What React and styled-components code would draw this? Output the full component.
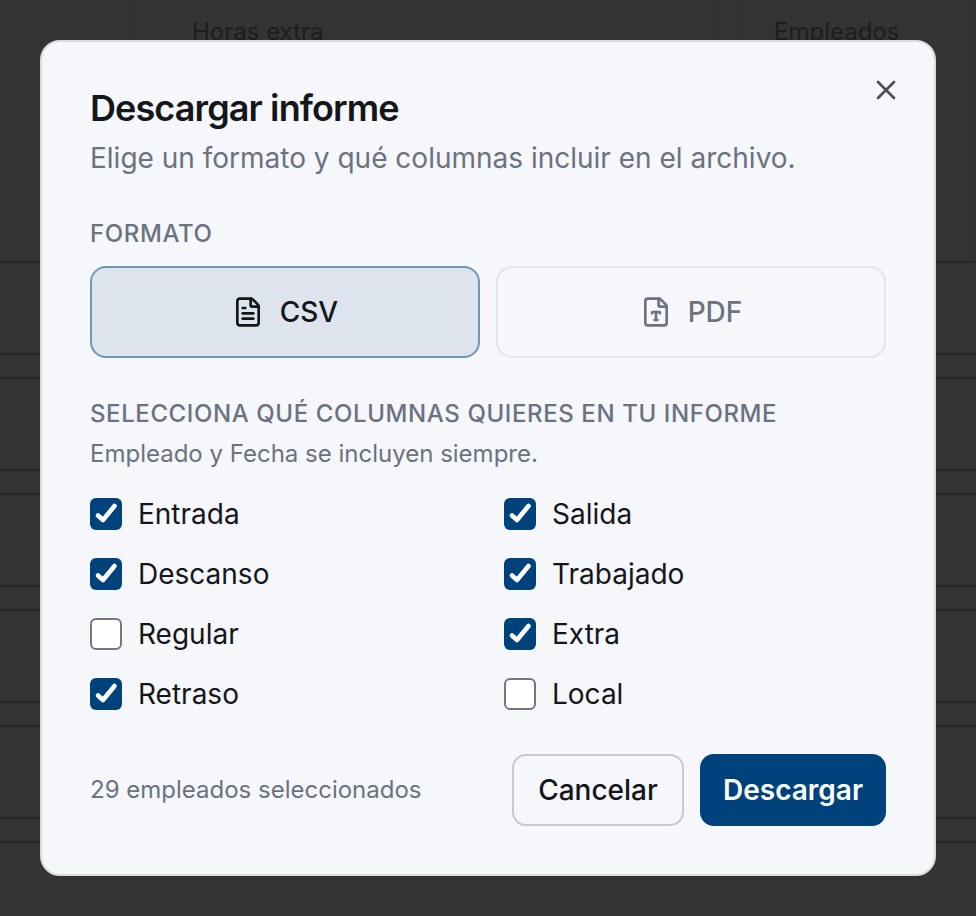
import React, { useState } from "react";
import styled, { createGlobalStyle } from "styled-components";
import { FileText, FileType, X } from "lucide-react";

const columns = [
  { name: "Entrada", on: true },
  { name: "Salida", on: true },
  { name: "Descanso", on: true },
  { name: "Trabajado", on: true },
  { name: "Regular", on: false },
  { name: "Extra", on: true },
  { name: "Retraso", on: true },
  { name: "Local", on: false },
];

const rows = [0, 1, 2, 3, 4];

const App = () => {
  const [format, setFormat] = useState("csv");
  const [selected, setSelected] = useState(columns);

  const onToggleHandler = (name) => {
    setSelected(
      selected.map((col) => (col.name === name ? { ...col, on: !col.on } : col))
    );
  };

  return (
    <>
      <GlobalStyle />
      <Page>
        <TableHead>
          <HeadCell $left="0px" $width="133px" />
          <HeadCell $left="59px" $width="583px">Horas extra</HeadCell>
          <HeadCell $left="0px" $width="26px" />
          <HeadCell $left="32px" $width="234px">Empleados</HeadCell>
        </TableHead>
        {rows.map((row) => (
          <div key={row}>
            <TableRow />
            <RowGap />
          </div>
        ))}
      </Page>
      <Overlay>
        <Dialog>
          <CloseButton aria-label="Cerrar">
            <X size={32} strokeWidth={2} />
          </CloseButton>
          <Title>Descargar informe</Title>
          <Subtitle>Elige un formato y qué columnas incluir en el archivo.</Subtitle>

          <SectionLabel>Formato</SectionLabel>
          <FormatRow>
            <FormatButton $active={format === "csv"} onClick={() => setFormat("csv")}>
              <FileText size={32} strokeWidth={2} />
              CSV
            </FormatButton>
            <FormatButton $active={format === "pdf"} onClick={() => setFormat("pdf")}>
              <FileType size={32} strokeWidth={2} />
              PDF
            </FormatButton>
          </FormatRow>

          <ColumnsLabel>Selecciona qué columnas quieres en tu informe</ColumnsLabel>
          <Hint>Empleado y Fecha se incluyen siempre.</Hint>
          <ColumnGrid>
            {selected.map((col) => (
              <CheckRow key={col.name} onClick={() => onToggleHandler(col.name)}>
                <CheckBox $on={col.on}>
                  {col.on && (
                    <svg width="32" height="32" viewBox="0 0 32 32" fill="none">
                      <path
                        d="M8 17.5 L13 22 L24.5 8"
                        stroke="#fff"
                        strokeWidth="4.6"
                        strokeLinecap="round"
                        strokeLinejoin="round"
                      />
                    </svg>
                  )}
                </CheckBox>
                {col.name}
              </CheckRow>
            ))}
          </ColumnGrid>

          <Footer>
            <Count>29 empleados seleccionados</Count>
            <FooterButtons>
              <CancelButton>Cancelar</CancelButton>
              <DownloadButton>Descargar</DownloadButton>
            </FooterButtons>
          </Footer>
        </Dialog>
      </Overlay>
    </>
  );
};

export default App;

const GlobalStyle = createGlobalStyle`
  html, body {
    margin: 0;
    height: 100%;
    background: #333333;
    overflow: hidden;
  }
  body {
    font-family: Inter, "Liberation Sans", sans-serif;
  }
  * {
    box-sizing: border-box;
  }
`;

const Page = styled.div`
  height: 916px;
  overflow: hidden;
`;

const TableHead = styled.div`
  display: flex;
  height: 263px;
  border-bottom: 2px solid #282a2a;
`;

const HeadCell = styled.div`
  width: ${({ $width }) => $width};
  padding: 18px 0 0 ${({ $left }) => $left};
  font-size: 24px;
  line-height: 28px;
  color: #1c1e1e;
  border-right: 1px solid #303030;
`;

const TableRow = styled.div`
  height: 90px;
`;

const RowGap = styled.div`
  height: 26px;
  border-top: 2px solid #282a2a;
  border-bottom: 2px solid #282a2a;
`;

const Overlay = styled.div`
  position: fixed;
  inset: 0;
  display: flex;
  align-items: center;
  justify-content: center;
`;

const Dialog = styled.div`
  position: relative;
  width: 896px;
  height: 836px;
  padding: 46px 48px 48px;
  background: #f5f7fb;
  border: 2px solid #d9dbe0;
  border-radius: 20px;
`;

const CloseButton = styled.button`
  position: absolute;
  top: 32px;
  right: 32px;
  width: 32px;
  height: 32px;
  padding: 0;
  border: none;
  background: transparent;
  color: #4b4f56;
  cursor: pointer;
`;

const Title = styled.h2`
  margin: 0;
  font-size: 36px;
  line-height: 40px;
  font-weight: 600;
  letter-spacing: -0.9px;
  color: #14161a;
`;

const Subtitle = styled.p`
  margin: 12px 0 0;
  font-size: 28px;
  line-height: 36px;
  color: #6b7280;
`;

const SectionLabel = styled.div`
  margin-top: 42px;
  font-size: 24px;
  line-height: 32px;
  font-weight: 500;
  letter-spacing: 0.6px;
  text-transform: uppercase;
  color: #6b7280;
`;

const FormatRow = styled.div`
  display: grid;
  grid-template-columns: 1fr 1fr;
  gap: 16px;
  margin-top: 16px;
`;

const FormatButton = styled.button`
  display: flex;
  align-items: center;
  justify-content: center;
  gap: 16px;
  height: 92px;
  font-family: inherit;
  font-size: 28px;
  font-weight: 500;
  border-radius: 16px;
  cursor: pointer;
  border: 2px solid ${({ $active }) => ($active ? "#6f97b8" : "#e2e5ea")};
  background: ${({ $active }) => ($active ? "#dde4ed" : "transparent")};
  color: ${({ $active }) => ($active ? "#14161a" : "#6b7280")};
`;

const ColumnsLabel = styled(SectionLabel)`
  margin-top: 40px;
`;

const Hint = styled.div`
  margin-top: 8px;
  font-size: 24px;
  line-height: 32px;
  color: #6b7280;
`;

const ColumnGrid = styled.div`
  display: grid;
  grid-template-columns: 1fr 1fr;
  column-gap: 32px;
  row-gap: 28px;
  margin-top: 28px;
`;

const CheckRow = styled.label`
  display: flex;
  align-items: center;
  gap: 16px;
  height: 32px;
  font-size: 28px;
  color: #14161a;
  cursor: pointer;
`;

const CheckBox = styled.span`
  display: flex;
  align-items: center;
  justify-content: center;
  width: 32px;
  height: 32px;
  border-radius: 6px;
  background: ${({ $on }) => ($on ? "#00437c" : "#ffffff")};
  border: ${({ $on }) => ($on ? "none" : "2px solid #75777c")};
`;

const Footer = styled.div`
  display: flex;
  align-items: center;
  justify-content: space-between;
  margin-top: 44px;
`;

const Count = styled.span`
  margin-bottom: 2px;
  font-size: 24px;
  color: #6b7280;
`;

const FooterButtons = styled.div`
  display: flex;
  gap: 16px;
`;

const CancelButton = styled.button`
  width: 172px;
  height: 72px;
  font-family: inherit;
  font-size: 28px;
  font-weight: 500;
  color: #14161a;
  background: transparent;
  border: 2px solid #c8cacf;
  border-radius: 14px;
  cursor: pointer;
`;

const DownloadButton = styled.button`
  width: 186px;
  height: 72px;
  font-family: inherit;
  font-size: 28px;
  font-weight: 600;
  color: #ffffff;
  background: #00437c;
  border: none;
  border-radius: 14px;
  cursor: pointer;
`;
